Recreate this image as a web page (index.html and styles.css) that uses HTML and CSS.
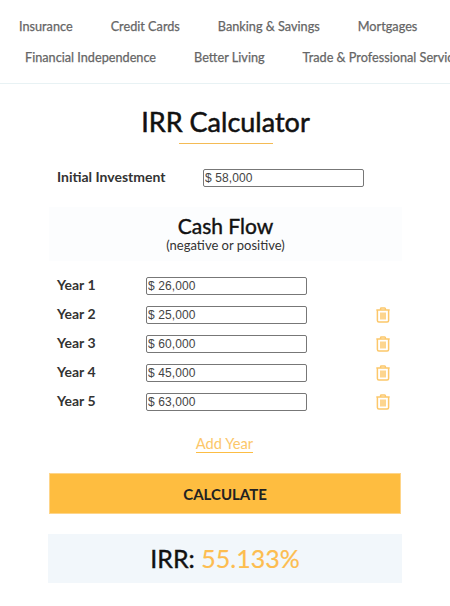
FILE: index.html
```html
<!DOCTYPE html>
<html lang="en">
<head>
<meta charset="utf-8">
<title>IRR Calculator</title>
<link rel="stylesheet" href="styles.css">
</head>
<body>
<svg class="defs" width="0" height="0" aria-hidden="true">
  <symbol id="trash" viewBox="0 0 14 16">
    <path d="M4.6 2.6V1.7c0-.5.3-.8.8-.8h3.2c.5 0 .8.3.8.8v.9M.3 3h13.4M1.4 3v10.6c0 .9.6 1.5 1.5 1.5h8.2c.9 0 1.5-.6 1.5-1.5V3M5 5.5v7M7 5.5v7M9 5.5v7" fill="none" stroke="currentColor" stroke-width="1.5"/>
  </symbol>
</svg>
<header class="site-nav">
  <nav class="nav-row nav-row-first">
    <a>Insurance</a><a>Credit Cards</a><a>Banking &amp; Savings</a><a>Mortgages</a>
  </nav>
  <nav class="nav-row nav-row-second">
    <a>Financial Independence</a><a>Better Living</a><a>Trade &amp; Professional Services</a>
  </nav>
</header>
<main class="calc">
  <h1 class="title">IRR Calculator</h1>
  <div class="rule"></div>
  <div class="initial">
    <label class="label">Initial Investment</label>
    <input class="field field-initial" type="text" value="$ 58,000">
  </div>
  <section class="cash-head">
    <h2>Cash Flow</h2>
    <p>(negative or positive)</p>
  </section>
  <div class="years">
    <div class="year"><label class="label">Year 1</label><input class="field" type="text" value="$ 26,000"></div>
    <div class="year"><label class="label">Year 2</label><input class="field" type="text" value="$ 25,000"><svg class="trash"><use href="#trash"/></svg></div>
    <div class="year"><label class="label">Year 3</label><input class="field" type="text" value="$ 60,000"><svg class="trash"><use href="#trash"/></svg></div>
    <div class="year"><label class="label">Year 4</label><input class="field" type="text" value="$ 45,000"><svg class="trash"><use href="#trash"/></svg></div>
    <div class="year"><label class="label">Year 5</label><input class="field" type="text" value="$ 63,000"><svg class="trash"><use href="#trash"/></svg></div>
  </div>
  <div class="add-wrap"><a class="add">Add Year</a></div>
  <button class="calculate" type="button">CALCULATE</button>
  <div class="result"><span class="irr">IRR:</span> <span class="pct">55.133%</span></div>
</main>
</body>
</html>
```

FILE: styles.css
```css
* { box-sizing: border-box; }
html, body { margin: 0; padding: 0; overflow: hidden; }
body {
  width: 450px;
  height: 606px;
  background: #fff;
  font-family: Lato, "Liberation Sans", sans-serif;
  color: #222;
}
.defs { position: absolute; }
.site-nav {
  height: 84px;
  padding-top: 10px;
  border-bottom: 1px solid #e8f2f4;
  overflow: hidden;
}
.nav-row {
  display: flex;
  gap: 38px;
  height: 31px;
  align-items: center;
  white-space: nowrap;
  font-size: 12.7px;
  -webkit-text-stroke: 0.25px #666;
  color: #666;
}
.nav-row-first { padding-left: 19px; }
.nav-row-second { padding-left: 25px; }
.calc {
  padding: 0 48px 0 49px;
}
.title {
  margin: 20px 0 0;
  font-size: 27px;
  line-height: 36px;
  font-weight: 400;
  -webkit-text-stroke: 0.5px #111;
  text-align: center;
  color: #111;
}
.rule {
  width: 94px;
  height: 1px;
  margin: 3px auto 0;
  background: #f4bb55;
}
.initial {
  display: flex;
  align-items: center;
  height: 18px;
  margin-top: 25px;
  padding-left: 8px;
}
.label {
  margin-top: -3px;
  font-size: 14px;
  font-weight: 700;
  color: #333;
}
.initial .label { width: 146px; }
.field {
  width: 161px;
  height: 18px;
  padding: 0 1px;
  border: 1px solid #777;
  border-radius: 2px;
  background: #fff;
  font-family: "Liberation Sans", Arial, sans-serif;
  font-size: 12px;
  letter-spacing: 0.1px;
  color: #444;
  outline: none;
}
.cash-head {
  height: 54px;
  margin-top: 20px;
  background: #fcfdfe;
  text-align: center;
  padding-top: 6px;
}
.cash-head h2 {
  margin: 0;
  font-size: 21px;
  line-height: 25px;
  font-weight: 400;
  -webkit-text-stroke: 0.4px #111;
  color: #111;
}
.cash-head p {
  margin: 0;
  font-size: 13px;
  line-height: 14px;
  color: #333;
}
.years {
  display: flex;
  flex-direction: column;
  gap: 11px;
  margin-top: 16px;
  padding-left: 8px;
}
.year {
  display: flex;
  align-items: center;
  height: 18px;
}
.year .label { width: 89px; }
.trash {
  width: 14px;
  height: 16px;
  margin-left: 69px;
  margin-top: -1px;
  color: #fcc76a;
}
.add-wrap {
  margin-top: 23px;
  padding-right: 2px;
  text-align: center;
  line-height: 18px;
}
.add {
  font-size: 14.7px;
  color: #fcc76a;
  border-bottom: 1px solid #fcbd44;
}
.calculate {
  display: block;
  width: 352px;
  height: 41px;
  margin-top: 21px;
  border: 1px solid #fed58a;
  border-radius: 0;
  background: #febd40;
  font-family: Lato, "Liberation Sans", sans-serif;
  font-size: 15px;
  font-weight: 700;
  color: #222;
}
.result {
  width: 354px;
  height: 49px;
  margin: 20px 0 0 -1px;
  background: #f2f7fb;
  text-align: center;
  font-size: 25px;
  line-height: 49px;
  color: #111;
}
.irr { -webkit-text-stroke: 0.4px #111; }
.pct { color: #fdbd50; -webkit-text-stroke: 0.2px #fdbd50; }
```
